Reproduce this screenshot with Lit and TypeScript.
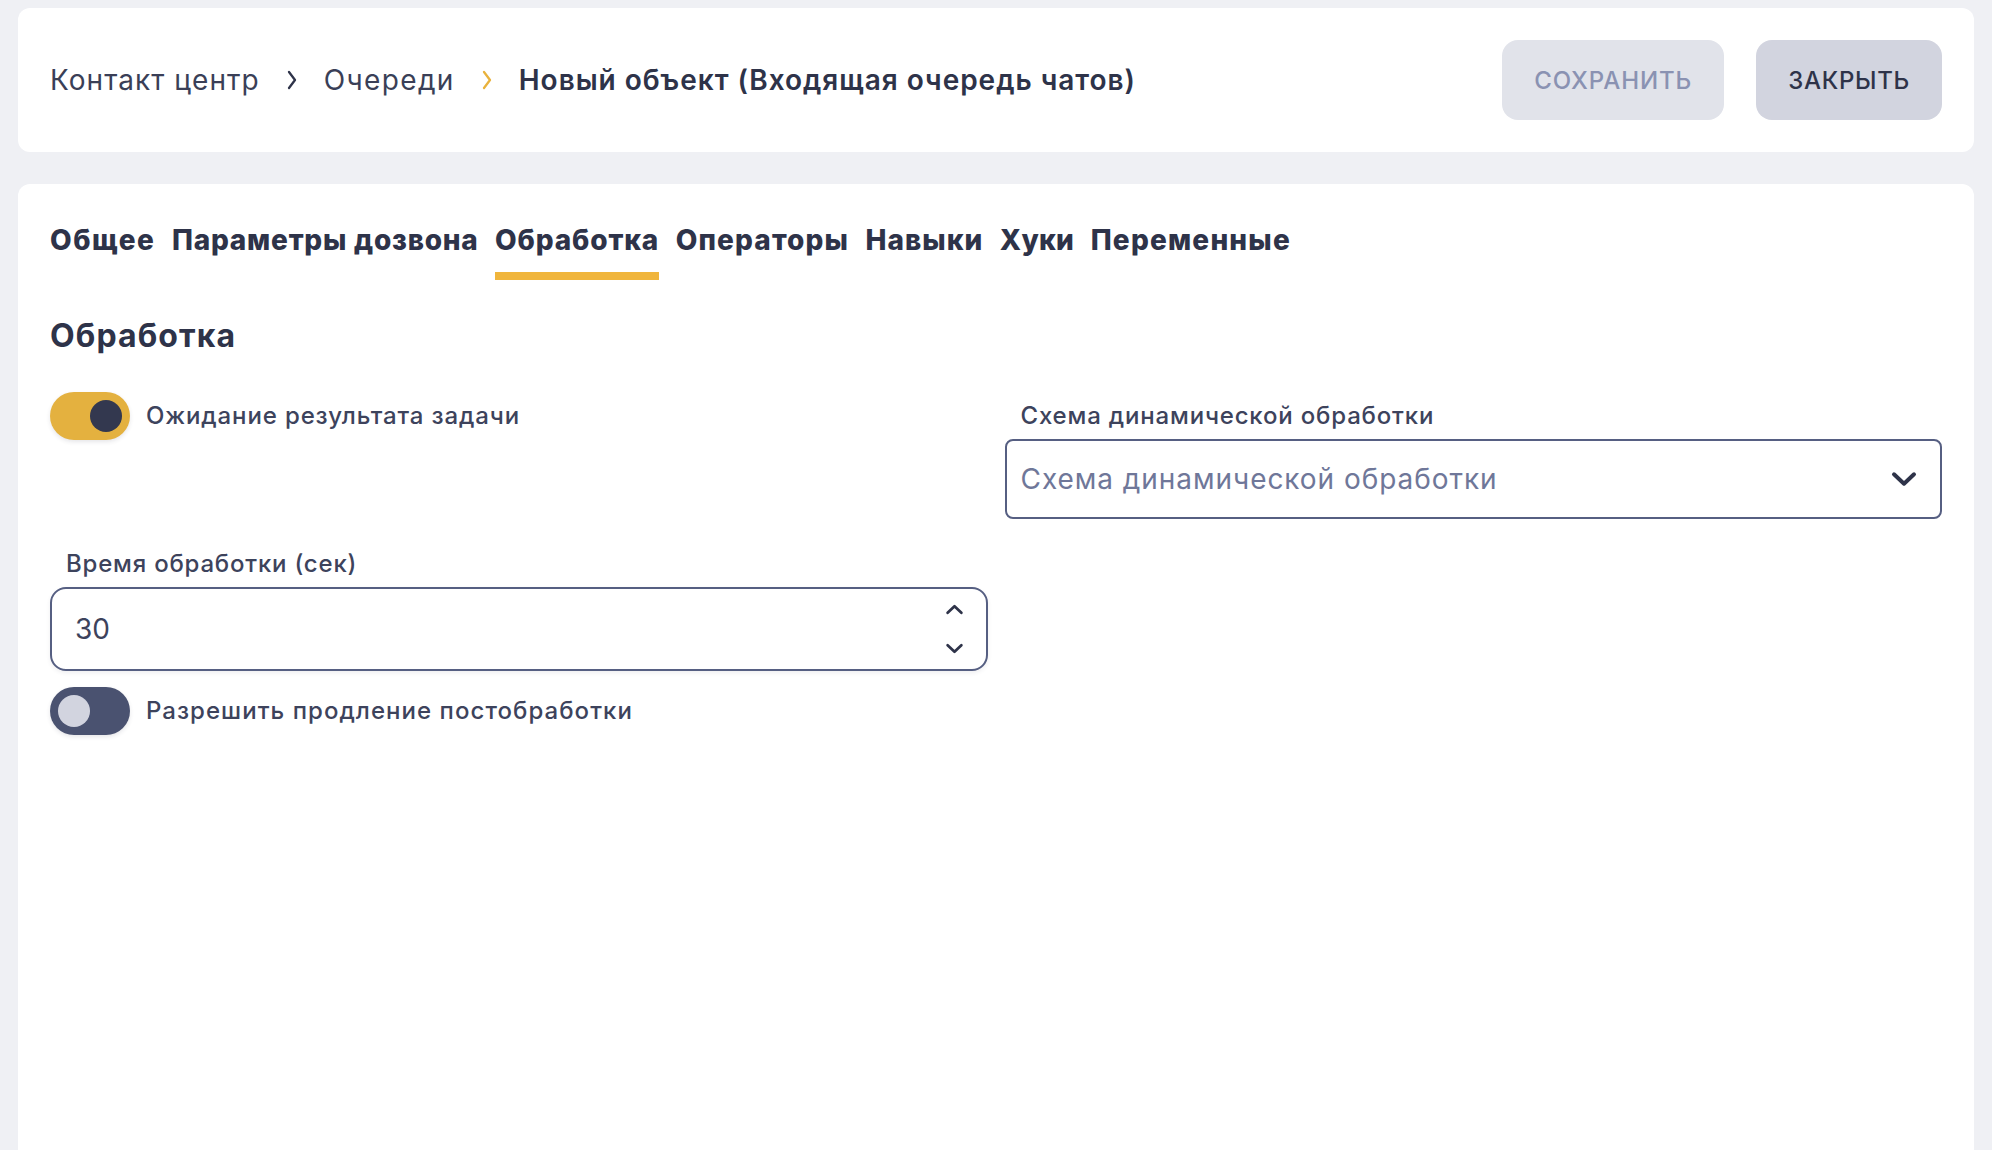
import { LitElement, html, css, svg } from "lit";
import { customElement } from "lit/decorators.js";

const chevronDown = svg`<path d="M2.5 2.5 L10 9.5 L17.5 2.5" fill="none" stroke="currentColor" stroke-width="3" stroke-linecap="round" stroke-linejoin="round"/>`;

@customElement("app-root")
export class AppRoot extends LitElement {
  static styles = css`
    :host { display: flex; flex-direction: column; gap: 32px; box-sizing: border-box; height: 1150px; overflow: hidden; padding: 8px 18px 0; background: #eff0f4; color: #2e3349; font-family: Inter, "Noto Sans", sans-serif; }
    .top { display: flex; align-items: center; height: 144px; flex: none; box-sizing: border-box; padding: 0 32px; background: #fff; border-radius: 12px; }
    .crumbs { display: flex; align-items: center; font-size: 28px; flex: 1; color: #3a3f57; }
    .c1 { letter-spacing: 1.05px; }
    .c2 { letter-spacing: 1.35px; }
    .sep { margin: 0 27px; width: 10px; height: 20px; display: block; color: #2e3349; flex: none; }
    .sep.y { color: #e9b23c; }
    .cur { font-weight: 600; letter-spacing: 0.97px; color: #2e3349; }
    .btn { height: 80px; display: flex; align-items: center; padding: 0 32px; border-radius: 16px; font-size: 24px; font-weight: 500; }
    .save { background: #e1e3ea; color: #8a92b2; margin-right: 32px; letter-spacing: 0.9px; }
    .close { background: #d2d4df; color: #2e3349; letter-spacing: 0.72px; }
    .main { flex: 1; background: #fff; border-radius: 12px 12px 0 0; padding: 32px 32px 0; }
    .tabs { display: flex; gap: 16.5px; }
    .tab { height: 64px; box-sizing: border-box; padding-bottom: 16px; line-height: 48px; font-size: 28px; font-weight: 800; border-bottom: 8px solid transparent; }
    .tab:nth-child(1) { letter-spacing: 1.55px; }
    .tab:nth-child(2) { letter-spacing: 0.77px; }
    .tab:nth-child(3) { letter-spacing: 0.85px; }
    .tab:nth-child(4) { letter-spacing: 1.15px; }
    .tab:nth-child(5) { letter-spacing: 1px; }
    .tab:nth-child(6) { letter-spacing: 0.3px; }
    .tab:nth-child(7) { letter-spacing: 1.2px; }
    .tab.on { border-bottom-color: #f0b53c; }
    h2 { margin: 33px 0 0; font-size: 32px; line-height: 46px; font-weight: 700; letter-spacing: 1.1px; }
    .grid { display: grid; grid-template-columns: 1fr 1fr; column-gap: 17px; margin-top: 33px; }
    .tg { display: flex; align-items: center; gap: 16px; font-size: 24px; font-weight: 500; color: #3d435c; align-self: start; }
    .tg span { position: relative; top: -1px; }
    .t1 { letter-spacing: 0.87px; }
    .t2 { letter-spacing: 1.04px; }
    .sw { width: 80px; height: 48px; border-radius: 24px; display: flex; align-items: center; padding: 0 8px; box-sizing: border-box; box-shadow: 0 2px 4px rgba(46,51,73,.12); }
    .sw i { width: 32px; height: 32px; border-radius: 50%; display: block; }
    .sw.on { background: #e4b13f; justify-content: flex-end; }
    .sw.on i { background: #33384f; }
    .sw.off { background: #4a5270; }
    .sw.off i { background: #d2d4df; }
    .lab { font-size: 24px; font-weight: 500; line-height: 30px; padding-left: 16px; color: #3d435c; }
    .l1 { letter-spacing: 0.82px; padding-top: 9px; }
    .l2 { letter-spacing: 0.79px; }
    .field { display: flex; flex-direction: column; }
    .sel { margin-top: 8px; box-sizing: border-box; height: 80px; border: 2px solid #565f82; border-radius: 8px; display: flex; align-items: center; justify-content: space-between; padding: 0 22px 0 14px; font-size: 28px; color: #6f7799; }
    .sel span { letter-spacing: 0.95px; }
    .sel svg { width: 28px; height: 16px; color: #2e3349; }
    .num { margin-top: 8px; box-sizing: border-box; height: 84px; border: 2px solid #565f82; border-radius: 16px; display: flex; align-items: center; justify-content: space-between; padding: 0 22px 0 23px; font-size: 28px; color: #3d435c; box-shadow: 0 2px 4px rgba(46,51,73,.08); }
    .spin { display: flex; flex-direction: column; gap: 28px; color: #2e3349; }
    .spin svg { width: 19px; height: 11px; display: block; }
    .spin svg.up { transform: scaleY(-1); }
    .mt { margin-top: 16px; }
    .r2 { margin-top: 30px; }
  `;
  render() {
    const sep = (y: boolean) => html`<svg class="sep ${y ? "y" : ""}" viewBox="0 0 10 20"><path d="M2 2 L8 10 L2 18" fill="none" stroke="currentColor" stroke-width="2.3" stroke-linecap="round" stroke-linejoin="round"/></svg>`;
    return html`
      <div class="top">
        <div class="crumbs"><span class="c1">Контакт центр</span>${sep(false)}<span class="c2">Очереди</span>${sep(true)}<span class="cur">Новый объект (Входящая очередь чатов)</span></div>
        <div class="btn save">СОХРАНИТЬ</div>
        <div class="btn close">ЗАКРЫТЬ</div>
      </div>
      <div class="main">
        <div class="tabs">
          <div class="tab">Общее</div><div class="tab">Параметры дозвона</div><div class="tab on">Обработка</div><div class="tab">Операторы</div><div class="tab">Навыки</div><div class="tab">Хуки</div><div class="tab">Переменные</div>
        </div>
        <h2>Обработка</h2>
        <div class="grid">
          <div class="tg"><div class="sw on"><i></i></div><span class="t1">Ожидание результата задачи</span></div>
          <div class="field"><div class="lab l1">Схема динамической обработки</div>
            <div class="sel"><span>Схема динамической обработки</span><svg viewBox="0 0 20 12">${chevronDown}</svg></div></div>
          <div class="field r2"><div class="lab l2">Время обработки (сек)</div>
            <div class="num"><span>30</span><div class="spin"><svg class="up" viewBox="0 0 20 12">${chevronDown}</svg><svg viewBox="0 0 20 12">${chevronDown}</svg></div></div>
            <div class="tg mt"><div class="sw off"><i></i></div><span class="t2">Разрешить продление постобработки</span></div>
          </div>
        </div>
      </div>
    `;
  }
}
